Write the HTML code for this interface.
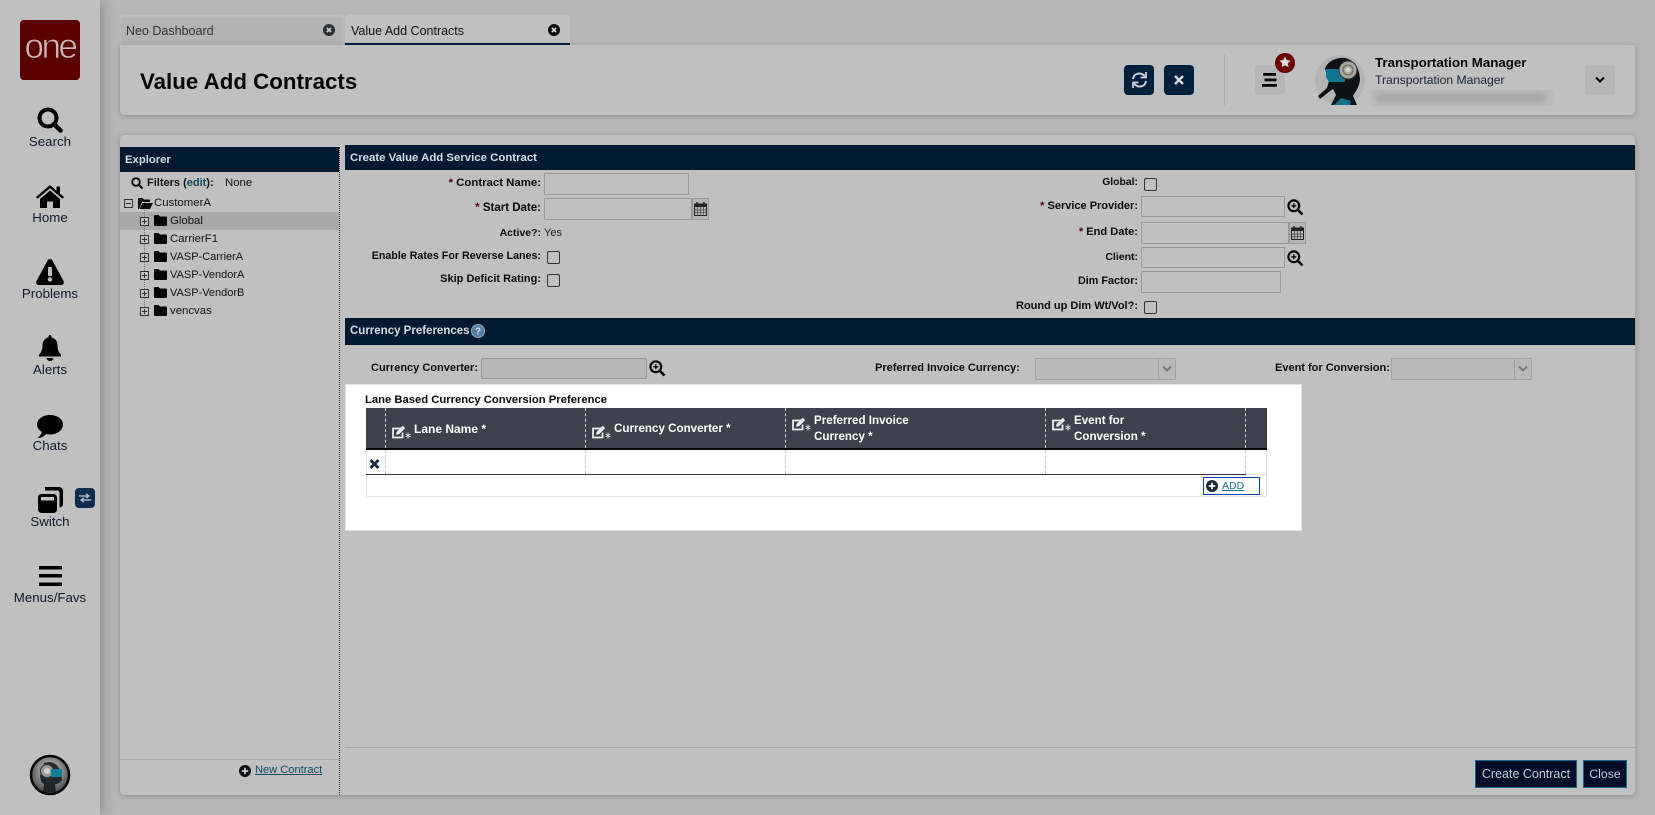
<!DOCTYPE html>
<html><head><meta charset="utf-8"><title>Value Add Contracts</title>
<style>
html,body{margin:0;padding:0;width:1655px;height:815px;overflow:hidden;background:#b6b6b6;font-family:"Liberation Sans",sans-serif;color:#0a0a0a;font-size:11.4px}
.a{position:absolute}
.t{position:absolute;white-space:nowrap;line-height:16px;height:16px}
.b{font-weight:bold;font-size:11px}
.r{text-align:right;left:300px}
.nav{position:absolute;left:0;width:100px;text-align:center;font-size:13.300px;line-height:16px;color:#101828}
.in{position:absolute;box-sizing:border-box;border:1px solid #999;background:#c0c0c0;border-radius:1px}
.cb{position:absolute;box-sizing:border-box;width:13px;height:13px;border:1px solid #333;border-radius:2px;background:#c0c0c0}
.cal{position:absolute;box-sizing:border-box;border:1px solid #999;background:#b6b6b6}
.hdr{position:absolute;background:#011a31;color:#d6dde2;font-weight:bold}
.dash{position:absolute;width:0;border-left:1px dashed #cfcfcf}
.dash2{position:absolute;width:0;border-left:1px dashed #c4c4c4}
.th{position:absolute;white-space:nowrap;color:#fff;font-weight:bold;line-height:16px;font-size:11.600px}
svg{position:absolute;overflow:visible}
.red{color:#5a0000}
</style></head><body>

<!-- sidebar -->
<div class="a" style="left:0;top:0;width:100px;height:815px;background:#c0c0c0;box-shadow:0 0 14px rgba(0,0,0,.3)"></div>
<div class="a" style="left:20px;top:20px;width:60px;height:60px;background:#5a0000;border-radius:4px"></div>
<div class="a" style="left:20px;top:27px;width:60px;text-align:center;color:#c9b7b7;font-size:35px;line-height:40px;letter-spacing:-2.500px;-webkit-text-stroke:.7px #5a0000">one</div>

<svg style="left:37px;top:107px" width="26" height="26" viewBox="0 0 26 26"><circle cx="11" cy="11" r="8.500" fill="none" stroke="#000" stroke-width="4"/><path d="M17 17l6.500 6.500" stroke="#000" stroke-width="4.500" stroke-linecap="round"/></svg>
<div class="nav" style="top:134px">Search</div>
<svg style="left:36px;top:185px" width="28" height="23" viewBox="0 0 28 23"><path d="M14 0L0 12l1.500 1.800L14 3.200l12.500 10.600L28 12l-4-3.400V1.500h-3.500v4.200z" fill="#000"/><path d="M14 5.500L4 14v9h7v-6.500h6V23h7v-9z" fill="#000"/></svg>
<div class="nav" style="top:210px">Home</div>
<svg style="left:36px;top:259px" width="28" height="26" viewBox="0 0 28 26"><path d="M14 0c-1 0-1.800.5-2.300 1.400L.5 22c-1 1.900.3 4 2.400 4h22.200c2.100 0 3.400-2.100 2.400-4L16.300 1.400C15.800.500 15 0 14 0z" fill="#000"/><rect x="12" y="8" width="4" height="9" rx="1" fill="#c0c0c0"/><circle cx="14" cy="20.500" r="2.200" fill="#c0c0c0"/></svg>
<div class="nav" style="top:286px">Problems</div>
<svg style="left:39px;top:335px" width="22" height="26" viewBox="0 0 22 26"><path d="M11 0c-1 0-1.500.7-1.500 1.700v.8C5.500 3.300 3.500 6.500 3.500 10.500c0 5-1.500 7-3.500 9v2h22v-2c-2-2-3.500-4-3.500-9 0-4-2-7.200-6-8v-.8C12.500.7 12 0 11 0z" fill="#000"/><path d="M7.500 23h7c-.5 2-2 3-3.500 3s-3-1-3.500-3z" fill="#000"/></svg>
<div class="nav" style="top:362px">Alerts</div>
<svg style="left:37px;top:415px" width="26" height="23" viewBox="0 0 26 23"><path d="M13 0C5.800 0 0 4.300 0 9.500c0 3 1.900 5.600 4.800 7.300C4.400 19 3 21.500.5 23c3.800 0 6.700-1.700 8.400-3.900 1.300.3 2.700.4 4.100.4 7.200 0 13-4.500 13-10S20.200 0 13 0z" fill="#000"/></svg>
<div class="nav" style="top:438px">Chats</div>
<svg style="left:38px;top:487px" width="25" height="26" viewBox="0 0 25 26"><path d="M7 0h14c2.200 0 4 1.800 4 4v13c0 2-1.500 3.500-3.500 3.500V6c0-1.500-1-2.500-2.500-2.500H7z" fill="#000"/><rect x="0" y="7" width="19" height="19" rx="3.500" fill="#000"/><rect x="3" y="10" width="13" height="3.500" fill="#c0c0c0"/></svg>
<div class="nav" style="top:514px">Switch</div>
<div class="a" style="left:75px;top:488px;width:20px;height:20px;border-radius:4px;background:#0f2d4f"></div>
<svg style="left:79px;top:493px" width="12" height="10" viewBox="0 0 12 10"><path d="M0 3h9M7 .8L10 3 7 5M12 7H3M5 4.800L2 7l3 2.200" stroke="#c3cbd2" stroke-width="1.200" fill="none"/></svg>
<svg style="left:39px;top:566px" width="23" height="20" viewBox="0 0 23 20"><rect width="23" height="3.500" fill="#000"/><rect y="8" width="23" height="3.500" fill="#000"/><rect y="16.500" width="23" height="3.500" fill="#000"/></svg>
<div class="nav" style="top:590px">Menus/Favs</div>

<svg style="left:30px;top:755px" width="40" height="40" viewBox="0 0 40 40"><defs><radialGradient id="g1" cx=".5" cy=".4" r=".6"><stop offset="0" stop-color="#d8d8d8"/><stop offset="1" stop-color="#444"/></radialGradient></defs><circle cx="20" cy="20" r="19" fill="url(#g1)" stroke="#050505" stroke-width="2.500"/><path d="M14 8c9-3 15 2 17 10l1 7c-2 3-4 4-7 4l1 8H13l1-8c-3-1-3-3-4-8z" fill="#111a20" opacity=".88"/><circle cx="17" cy="16" r="6.500" fill="#9a9a9a" stroke="#333"/><circle cx="17" cy="16" r="3" fill="#d0d0d0"/><rect x="21" y="14" width="11" height="8" rx="1" fill="#0f7f97"/></svg>

<!-- tabs -->
<div class="a" style="left:120px;top:15px;width:224px;height:30px;background:#b3b3b3;border-radius:4px 4px 0 0;box-shadow:inset 0 2px 2px #c0c0c0"></div>
<div class="t" style="left:126px;top:23px;color:#333;font-size:12.500px">Neo Dashboard</div>
<svg style="left:323px;top:24px" width="12" height="12" viewBox="0 0 12 12"><circle cx="6" cy="6" r="6" fill="#2c2f33"/><path d="M3.800 3.800l4.400 4.400M8.200 3.800L3.800 8.200" stroke="#ccc" stroke-width="1.600"/></svg>
<div class="a" style="left:345px;top:15px;width:225px;height:28px;background:#c0c0c0;border-radius:4px 4px 0 0;border-bottom:2px solid #01203c"></div>
<div class="t" style="left:351px;top:23px;font-size:12.500px;color:#111">Value Add Contracts</div>
<svg style="left:548px;top:24px" width="12" height="12" viewBox="0 0 12 12"><circle cx="6" cy="6" r="6" fill="#0b0b0b"/><path d="M3.800 3.800l4.400 4.400M8.200 3.800L3.800 8.200" stroke="#ddd" stroke-width="1.600"/></svg>

<!-- header panel -->
<div class="a" style="left:120px;top:45px;width:1515px;height:70px;background:#c0c0c0;border-radius:0 0 4px 4px;box-shadow:0 1px 6px rgba(0,0,0,.22)"></div>
<div class="t" style="left:140px;top:68px;font-weight:bold;font-size:22.300px;line-height:28px;height:28px;color:#050505">Value Add Contracts</div>
<div class="a" style="left:1124px;top:65px;width:30px;height:30px;background:#01203c;border-radius:4px"></div>
<svg style="left:1131px;top:71px" width="17" height="18" viewBox="0 0 17 18" fill="none" stroke="#c6d0d6" stroke-width="2"><path d="M2 8C2.500 4.500 5 2.500 8.500 2.500c2.500 0 4 1 5.500 3"/><path d="M15 10c-.5 3.500-3 5.500-6.500 5.500-2.500 0-4-1-5.500-3"/><path d="M15 1v5.500H9.500M2 17v-5.500h5.500" stroke-width="1.800"/></svg>
<div class="a" style="left:1164px;top:65px;width:30px;height:30px;background:#01203c;border-radius:4px"></div>
<svg style="left:1174px;top:75px" width="10" height="10" viewBox="0 0 10 10"><path d="M1 1l8 8M9 1L1 9" stroke="#d0d6da" stroke-width="2.600"/></svg>
<div class="a" style="left:1224px;top:55px;width:1px;height:50px;background:#aaa"></div>
<div class="a" style="left:1255px;top:65px;width:30px;height:30px;background:#b6b6b6;border-radius:4px"></div>
<svg style="left:1262px;top:73px" width="15" height="14" viewBox="0 0 15 14"><rect x="1" width="13" height="2.800" fill="#050505"/><rect x="2.500" y="5.500" width="12" height="2.800" fill="#050505"/><rect y="11" width="15" height="2.800" fill="#050505"/></svg>
<div class="a" style="left:1275px;top:53px;width:20px;height:20px;border-radius:50%;background:#6a0000"></div>
<svg style="left:1279px;top:56px" width="12" height="12" viewBox="0 0 24 24"><path d="M12 1l3.400 7.300 7.800 1-5.700 5.400 1.500 7.800L12 18.700l-7 3.800 1.500-7.800L.8 9.300l7.800-1z" fill="#ddd"/></svg>
<svg style="left:1315px;top:55px" width="50" height="50" viewBox="0 0 50 50"><circle cx="25" cy="25" r="25" fill="#b4b4b4"/><path d="M10 14C12 6 22 2 30 3c9 2 15 10 15 22-1 8-5 12-7 16l4 9H16l5-10-3-6C12 38 8 42 5 44l-2-3 9-8 2-7z" fill="#0c1216"/><path d="M11 14h19v13H14l-3-5z" fill="#10758e"/><circle cx="33" cy="15" r="9" fill="#a9a79c" stroke="#333"/><circle cx="33" cy="15" r="5" fill="none" stroke="#666"/><circle cx="33" cy="15" r="2.500" fill="#d4d0c4"/><path d="M19 50l7-7 10 3-1 4z" fill="#12708a"/></svg>
<div class="t" style="left:1375px;top:55px;font-weight:bold;font-size:13.300px;color:#050505">Transportation Manager</div>
<div class="t" style="left:1375px;top:72px;font-size:12.200px;color:#1a2230">Transportation Manager</div>
<div class="a" style="left:1371px;top:90px;width:183px;height:16px;background:#bbb"></div>
<div class="a" style="left:1376px;top:93px;width:170px;height:9px;background:#a6a6a6;filter:blur(3px)"></div>
<div class="a" style="left:1585px;top:65px;width:30px;height:30px;background:#b6b6b6;border-radius:4px"></div>
<svg style="left:1595px;top:76px" width="10" height="8" viewBox="0 0 10 8"><path d="M1 1.500l4 4 4-4" stroke="#0a0a0a" stroke-width="2.200" fill="none"/></svg>

<!-- main panel -->
<div class="a" style="left:120px;top:135px;width:1515px;height:660px;background:#c0c0c0;border-radius:4px;box-shadow:0 1px 6px rgba(0,0,0,.22)"></div>

<!-- explorer -->
<div class="hdr" style="left:120px;top:147px;width:219px;height:25px"></div>
<div class="t" style="left:125px;top:152px;color:#d6dde2;font-weight:bold;font-size:11.300px">Explorer</div>
<div class="a" style="left:339px;top:147px;width:0;height:648px;border-left:1px dotted #333"></div>
<svg style="left:131px;top:177px" width="12" height="12" viewBox="0 0 12 12"><circle cx="5" cy="5" r="3.800" fill="none" stroke="#0a0a0a" stroke-width="1.800"/><path d="M8 8l3.500 3.500" stroke="#0a0a0a" stroke-width="2"/></svg>
<div class="t b" style="left:147px;top:175px;color:#111">Filters (<span style="color:#12465e">edit</span>):</div>
<div class="t" style="left:225px;top:175px;color:#111">None</div>

<svg style="left:124px;top:199px" width="10" height="10" viewBox="0 0 10 10"><rect x=".5" y=".5" width="8" height="8" fill="none" stroke="#333"/><path d="M2 4.500h5" stroke="#333"/></svg>
<svg style="left:138px;top:198px" width="15" height="11" viewBox="0 0 15 11"><path d="M0 11V1c0-.6.400-1 1-1h3.500l1.500 1.500h5c.6 0 1 .4 1 1V4H4L1 11z" fill="#0a0a0a"/><path d="M4.500 5H15l-3 6H1.500z" fill="#0a0a0a"/></svg>
<div class="t" style="left:154px;top:195px;color:#111">CustomerA</div>
<div class="a" style="left:120px;top:212px;width:219px;height:18px;background:#a9a9a9"></div>
<div class="a" style="left:144px;top:210px;height:105px;width:0;border-left:1px dotted #777"></div>

<svg style="left:140px;top:217px" width="10" height="10" viewBox="0 0 10 10"><rect x=".5" y=".5" width="8" height="8" fill="#c0c0c0" stroke="#333"/><path d="M2 4.500h5M4.500 2v5" stroke="#333"/></svg>
<svg style="left:154px;top:215px" width="13" height="11" viewBox="0 0 13 11"><path d="M0 1c0-.6.400-1 1-1h3.500L6 1.500h6c.6 0 1 .4 1 1V10c0 .6-.4 1-1 1H1c-.6 0-1-.4-1-1z" fill="#050505"/></svg>
<div class="t" style="left:170px;top:213px;color:#111">Global</div>
<svg style="left:140px;top:235px" width="10" height="10" viewBox="0 0 10 10"><rect x=".5" y=".5" width="8" height="8" fill="#c0c0c0" stroke="#333"/><path d="M2 4.500h5M4.500 2v5" stroke="#333"/></svg>
<svg style="left:154px;top:233px" width="13" height="11" viewBox="0 0 13 11"><path d="M0 1c0-.6.400-1 1-1h3.500L6 1.500h6c.6 0 1 .4 1 1V10c0 .6-.4 1-1 1H1c-.6 0-1-.4-1-1z" fill="#050505"/></svg>
<div class="t" style="left:170px;top:231px;color:#111">CarrierF1</div>
<svg style="left:140px;top:253px" width="10" height="10" viewBox="0 0 10 10"><rect x=".5" y=".5" width="8" height="8" fill="#c0c0c0" stroke="#333"/><path d="M2 4.500h5M4.500 2v5" stroke="#333"/></svg>
<svg style="left:154px;top:251px" width="13" height="11" viewBox="0 0 13 11"><path d="M0 1c0-.6.400-1 1-1h3.500L6 1.500h6c.6 0 1 .4 1 1V10c0 .6-.4 1-1 1H1c-.6 0-1-.4-1-1z" fill="#050505"/></svg>
<div class="t" style="left:170px;top:249px;color:#111;font-size:11px">VASP-CarrierA</div>
<svg style="left:140px;top:271px" width="10" height="10" viewBox="0 0 10 10"><rect x=".5" y=".5" width="8" height="8" fill="#c0c0c0" stroke="#333"/><path d="M2 4.500h5M4.500 2v5" stroke="#333"/></svg>
<svg style="left:154px;top:269px" width="13" height="11" viewBox="0 0 13 11"><path d="M0 1c0-.6.400-1 1-1h3.500L6 1.500h6c.6 0 1 .4 1 1V10c0 .6-.4 1-1 1H1c-.6 0-1-.4-1-1z" fill="#050505"/></svg>
<div class="t" style="left:170px;top:267px;color:#111;font-size:11px">VASP-VendorA</div>
<svg style="left:140px;top:289px" width="10" height="10" viewBox="0 0 10 10"><rect x=".5" y=".5" width="8" height="8" fill="#c0c0c0" stroke="#333"/><path d="M2 4.500h5M4.500 2v5" stroke="#333"/></svg>
<svg style="left:154px;top:287px" width="13" height="11" viewBox="0 0 13 11"><path d="M0 1c0-.6.400-1 1-1h3.500L6 1.500h6c.6 0 1 .4 1 1V10c0 .6-.4 1-1 1H1c-.6 0-1-.4-1-1z" fill="#050505"/></svg>
<div class="t" style="left:170px;top:285px;color:#111;font-size:11px">VASP-VendorB</div>
<svg style="left:140px;top:307px" width="10" height="10" viewBox="0 0 10 10"><rect x=".5" y=".5" width="8" height="8" fill="#c0c0c0" stroke="#333"/><path d="M2 4.500h5M4.500 2v5" stroke="#333"/></svg>
<svg style="left:154px;top:305px" width="13" height="11" viewBox="0 0 13 11"><path d="M0 1c0-.6.400-1 1-1h3.500L6 1.500h6c.6 0 1 .4 1 1V10c0 .6-.4 1-1 1H1c-.6 0-1-.4-1-1z" fill="#050505"/></svg>
<div class="t" style="left:170px;top:303px;color:#111">vencvas</div>

<div class="a" style="left:120px;top:759px;width:219px;height:1px;background:#aaa"></div>
<svg style="left:239px;top:765px" width="12" height="12" viewBox="0 0 12 12"><circle cx="6" cy="6" r="6" fill="#0a0f14"/><path d="M2.800 6h6.400M6 2.800v6.400" stroke="#d0d0d0" stroke-width="1.700"/></svg>
<div class="t" style="left:255px;top:762px;color:#0e4a63;text-decoration:underline;font-size:11.100px">New Contract</div>

<!-- section header -->
<div class="hdr" style="left:345px;top:145px;width:1290px;height:25px"></div>
<div class="t" style="left:350px;top:150px;color:#d6dde2;font-weight:bold;font-size:11.400px">Create Value Add Service Contract</div>

<!-- left form -->
<div class="t b r" style="width:241px;top:175px;font-size:11.400px"><span class="red">*</span> Contract Name:</div>
<div class="in" style="left:544px;top:173px;width:145px;height:22px"></div>
<div class="t b r" style="width:241px;top:200px;font-size:11.500px"><span class="red">*</span> Start Date:</div>
<div class="in" style="left:544px;top:198px;width:148px;height:22px"></div>
<div class="cal" style="left:692px;top:198px;width:17px;height:22px"></div>
<svg style="left:694px;top:202px" width="13" height="14" viewBox="0 0 13 14"><rect x=".5" y="2" width="12" height="11.500" fill="none" stroke="#222"/><rect x=".5" y="2" width="12" height="3" fill="#222"/><path d="M3 0v3M10 0v3" stroke="#222" stroke-width="1.500"/><path d="M.5 8h12M.5 10.700h12M3.500 5v8.500M6.500 5v8.500M9.500 5v8.500" stroke="#444" stroke-width=".7"/></svg>
<div class="t b r" style="width:241px;top:225px;font-size:10.500px">Active?:</div>
<div class="t" style="left:544px;top:225px;color:#222;font-size:11px">Yes</div>
<div class="t b r" style="width:241px;top:248px;font-size:10.700px">Enable Rates For Reverse Lanes:</div>
<div class="cb" style="left:547px;top:251px"></div>
<div class="t b r" style="width:241px;top:271px">Skip Deficit Rating:</div>
<div class="cb" style="left:547px;top:274px"></div>

<!-- right form -->
<div class="t b r" style="width:838px;top:175px;font-size:10.400px">Global:</div>
<div class="cb" style="left:1144px;top:178px"></div>
<div class="t b r" style="width:838px;top:198px"><span class="red">*</span> Service Provider:</div>
<div class="in" style="left:1141px;top:196px;width:144px;height:21px"></div>
<svg style="left:1287px;top:199px" width="17" height="16" viewBox="0 0 17 16"><circle cx="6.800" cy="6.800" r="5.400" fill="none" stroke="#050505" stroke-width="2.200"/><path d="M11 11l4.500 4.500" stroke="#050505" stroke-width="2.500"/><path d="M4.300 6.800h5M6.800 4.300v5" stroke="#050505" stroke-width="1.400"/></svg>
<div class="t b r" style="width:838px;top:224px;font-size:11.100px"><span class="red">*</span> End Date:</div>
<div class="in" style="left:1141px;top:222px;width:148px;height:22px"></div>
<div class="cal" style="left:1289px;top:222px;width:17px;height:22px"></div>
<svg style="left:1291px;top:226px" width="13" height="14" viewBox="0 0 13 14"><rect x=".5" y="2" width="12" height="11.500" fill="none" stroke="#222"/><rect x=".5" y="2" width="12" height="3" fill="#222"/><path d="M3 0v3M10 0v3" stroke="#222" stroke-width="1.500"/><path d="M.5 8h12M.5 10.700h12M3.500 5v8.500M6.500 5v8.500M9.500 5v8.500" stroke="#444" stroke-width=".7"/></svg>
<div class="t b r" style="width:838px;top:249px;font-size:10.500px">Client:</div>
<div class="in" style="left:1141px;top:247px;width:144px;height:21px"></div>
<svg style="left:1287px;top:250px" width="17" height="16" viewBox="0 0 17 16"><circle cx="6.800" cy="6.800" r="5.400" fill="none" stroke="#050505" stroke-width="2.200"/><path d="M11 11l4.500 4.500" stroke="#050505" stroke-width="2.500"/><path d="M4.300 6.800h5M6.800 4.300v5" stroke="#050505" stroke-width="1.400"/></svg>
<div class="t b r" style="width:838px;top:273px;font-size:10.800px">Dim Factor:</div>
<div class="in" style="left:1141px;top:271px;width:140px;height:22px"></div>
<div class="t b r" style="width:838px;top:298px">Round up Dim Wt/Vol?:</div>
<div class="cb" style="left:1144px;top:301px"></div>

<!-- currency header -->
<div class="hdr" style="left:345px;top:318px;width:1290px;height:27px"></div>
<div class="t" style="left:350px;top:323px;color:#d6dde2;font-weight:bold;font-size:11.500px">Currency Preferences</div>
<svg style="left:471px;top:324px" width="14" height="14" viewBox="0 0 14 14"><circle cx="7" cy="7" r="6.500" fill="#4f7ea6" stroke="#9ab"/><text x="7" y="10.500" font-size="10" font-weight="bold" text-anchor="middle" fill="#dde" font-family="Liberation Sans">?</text></svg>

<div class="t b" style="left:371px;top:360px">Currency Converter:</div>
<div class="in" style="left:481px;top:358px;width:166px;height:21px;background:#b6b6b6"></div>
<svg style="left:649px;top:360px" width="17" height="16" viewBox="0 0 17 16"><circle cx="6.800" cy="6.800" r="5.400" fill="none" stroke="#050505" stroke-width="2.200"/><path d="M11 11l4.500 4.500" stroke="#050505" stroke-width="2.500"/><path d="M4.300 6.800h5M6.800 4.300v5" stroke="#050505" stroke-width="1.400"/></svg>
<div class="t b" style="left:875px;top:360px">Preferred Invoice Currency:</div>
<div class="in" style="left:1035px;top:358px;width:141px;height:22px;background:#b9b9b9;border-color:#a3a3a3"></div>
<div class="a" style="left:1158px;top:358px;width:1px;height:22px;background:#a3a3a3"></div>
<svg style="left:1162px;top:365px" width="10" height="8" viewBox="0 0 10 8"><path d="M1 1.500l4 4 4-4" stroke="#777" stroke-width="2" fill="none"/></svg>
<div class="t b" style="left:1275px;top:360px">Event for Conversion:</div>
<div class="in" style="left:1391px;top:358px;width:141px;height:22px;background:#b9b9b9;border-color:#a3a3a3"></div>
<div class="a" style="left:1514px;top:358px;width:1px;height:22px;background:#a3a3a3"></div>
<svg style="left:1518px;top:365px" width="10" height="8" viewBox="0 0 10 8"><path d="M1 1.500l4 4 4-4" stroke="#777" stroke-width="2" fill="none"/></svg>

<!-- white box -->
<div class="a" style="left:345px;top:384px;width:957px;height:147px;box-sizing:border-box;background:#fff;border:1px solid #e4e4e4"></div>
<div class="t" style="left:365px;top:392px;font-weight:bold;font-size:11.250px;color:#0a0a0a">Lane Based Currency Conversion Preference</div>
<div class="a" style="left:366px;top:408px;width:901px;height:89px;box-sizing:border-box;border:1px solid #e2e2e2"></div>
<div class="a" style="left:366px;top:408px;width:901px;height:40px;background:#3c434d"></div>
<div class="a" style="left:366px;top:448px;width:901px;height:2px;background:#050505"></div>
<div class="a" style="left:366px;top:474px;width:880px;height:1px;background:#333"></div>
<div class="a" style="left:1246px;top:474px;width:21px;height:1px;background:#ddd"></div>

<div class="dash" style="left:385px;top:408px;height:40px"></div>
<div class="dash" style="left:585px;top:408px;height:40px"></div>
<div class="dash" style="left:785px;top:408px;height:40px"></div>
<div class="dash" style="left:1045px;top:408px;height:40px"></div>
<div class="dash" style="left:1245px;top:408px;height:40px"></div>
<div class="dash2" style="left:385px;top:450px;height:24px"></div>
<div class="dash2" style="left:585px;top:450px;height:24px"></div>
<div class="dash2" style="left:785px;top:450px;height:24px"></div>
<div class="dash2" style="left:1045px;top:450px;height:24px"></div>
<div class="dash2" style="left:1245px;top:450px;height:24px"></div>

<svg style="left:392px;top:425px" width="20" height="14" viewBox="0 0 20 14"><path d="M9.500 3.500H1v9h9.500V7.500" fill="none" stroke="#eee" stroke-width="1.800"/><path d="M4 9.800l.7-3L10.800 .8 13.200 3.200 7 9.200z" fill="#eee"/><path d="M16 7.500v6M13.500 9l5 3M18.500 9l-5 3" stroke="#ddd"/></svg>
<div class="th" style="left:414px;top:421px;font-size:12px">Lane Name *</div>
<svg style="left:592px;top:425px" width="20" height="14" viewBox="0 0 20 14"><path d="M9.500 3.500H1v9h9.500V7.500" fill="none" stroke="#eee" stroke-width="1.800"/><path d="M4 9.800l.7-3L10.800 .8 13.200 3.200 7 9.200z" fill="#eee"/><path d="M16 7.500v6M13.500 9l5 3M18.500 9l-5 3" stroke="#ddd"/></svg>
<div class="th" style="left:614px;top:421px">Currency Converter *</div>
<svg style="left:792px;top:417px" width="20" height="14" viewBox="0 0 20 14"><path d="M9.500 3.500H1v9h9.500V7.500" fill="none" stroke="#eee" stroke-width="1.800"/><path d="M4 9.800l.7-3L10.800 .8 13.200 3.200 7 9.200z" fill="#eee"/><path d="M16 7.500v6M13.500 9l5 3M18.500 9l-5 3" stroke="#ddd"/></svg>
<div class="th" style="left:814px;top:413px">Preferred Invoice</div>
<div class="th" style="left:814px;top:429px">Currency *</div>
<svg style="left:1052px;top:417px" width="20" height="14" viewBox="0 0 20 14"><path d="M9.500 3.500H1v9h9.500V7.500" fill="none" stroke="#eee" stroke-width="1.800"/><path d="M4 9.800l.7-3L10.800 .8 13.200 3.200 7 9.200z" fill="#eee"/><path d="M16 7.500v6M13.500 9l5 3M18.500 9l-5 3" stroke="#ddd"/></svg>
<div class="th" style="left:1074px;top:413px">Event for</div>
<div class="th" style="left:1074px;top:429px">Conversion *</div>

<svg style="left:369px;top:459px" width="11" height="10" viewBox="0 0 11 10"><path d="M1.500 1l8 8M9.500 1l-8 8" stroke="#1b2a3a" stroke-width="3"/></svg>

<div class="a" style="left:1203px;top:477px;width:57px;height:18px;box-sizing:border-box;border:1px solid #0a3fb5"></div>
<svg style="left:1206px;top:480px" width="12" height="12" viewBox="0 0 12 12"><circle cx="6" cy="6" r="6" fill="#1b2a3a"/><path d="M2.800 6h6.400M6 2.800v6.400" stroke="#fff" stroke-width="1.700"/></svg>
<div class="t" style="left:1222px;top:478px;color:#13708c;text-decoration:underline;font-size:10.500px">ADD</div>

<!-- footer -->
<div class="a" style="left:345px;top:747px;width:1290px;height:1px;background:#aaa"></div>
<div class="a" style="left:1475px;top:760px;width:102px;height:28px;box-sizing:border-box;background:#000d28;border:1px solid #0b6a8a;color:#c6cdd2;text-align:center;line-height:26px;font-size:12.500px">Create Contract</div>
<div class="a" style="left:1583px;top:760px;width:44px;height:28px;box-sizing:border-box;background:#000d28;border:1px solid #0b6a8a;color:#c6cdd2;text-align:center;line-height:26px;font-size:12.300px">Close</div>

</body></html>
